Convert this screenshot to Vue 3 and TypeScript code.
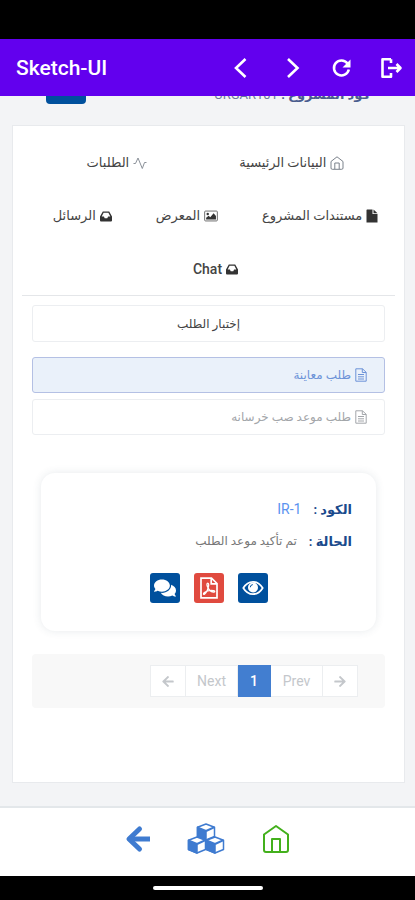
<script setup lang="ts">
import { ref } from 'vue'

interface Tab {
  label: string
  icon: 'home' | 'pulse' | 'file' | 'image' | 'inbox'
}

const tabRows: { layout: string; tabs: Tab[] }[] = [
  {
    layout: 'wide',
    tabs: [
      { label: 'البيانات الرئيسية', icon: 'home' },
      { label: 'الطلبات', icon: 'pulse' },
    ],
  },
  {
    layout: 'tight',
    tabs: [
      { label: 'مستندات المشروع', icon: 'file' },
      { label: 'المعرض', icon: 'image' },
      { label: 'الرسائل', icon: 'inbox' },
    ],
  },
  { layout: 'latin', tabs: [{ label: 'Chat', icon: 'inbox' }] },
]

const requestTypes: string[] = ['طلب معاينة', 'طلب موعد صب خرسانه']
const selected = ref<number>(0)

const arrowPath =
  'M257.5 445.1l-22.2 22.2c-9.4 9.4-24.6 9.4-33.9 0L7 273c-9.4-9.4-9.4-24.6 0-33.9L201.4 44.7c9.4-9.4 24.6-9.4 33.9 0l22.2 22.2c9.5 9.5 9.3 25-.4 34.3L136.6 216H424c13.3 0 24 10.7 24 24v32c0 13.3-10.7 24-24 24H136.6l120.5 114.8c9.8 9.3 10 24.8.4 34.3z'
</script>

<template>
  <div class="screen">
    <div class="status"></div>
    <header class="bar">
      <h1>Sketch-UI</h1>
      <nav class="bar-actions">
        <button type="button" aria-label="Back">
          <svg width="24" height="24" viewBox="0 0 24 24" class="line"><path d="M16.500 3 7 12l9.500 9" /></svg>
        </button>
        <button type="button" aria-label="Forward">
          <svg width="24" height="24" viewBox="0 0 24 24" class="line"><path d="M9 3l9.500 9L9 21" /></svg>
        </button>
        <button type="button" aria-label="Reload">
          <svg width="24" height="24" viewBox="0 0 24 24">
            <path fill="none" stroke="#fff" stroke-width="2.500" d="M18.500 7.500A7.500 7.500 0 1 0 19.800 13.500" />
            <path fill="#fff" d="M21.500 3.500v8h-8z" />
          </svg>
        </button>
        <button type="button" aria-label="Log out">
          <svg width="24" height="24" viewBox="0 0 24 24" class="line" stroke-linejoin="round">
            <path d="M12 3.200H3.500v17.600H12V17M12 3.200V7M9 12h12.500M17.500 8l4 4-4 4" />
          </svg>
        </button>
      </nav>
    </header>

    <main class="page" dir="rtl">
      <div class="project">
        <p><b>كود المشروع :</b> <span dir="ltr">URGAR101</span></p>
        <button type="button" aria-label="Project"></button>
      </div>

      <section class="panel">
        <nav class="tabs">
          <div v-for="(row, r) in tabRows" :key="r" class="tab-row" :class="row.layout">
            <a v-for="tab in row.tabs" :key="tab.label" href="#" class="tab">
              <svg v-if="tab.icon === 'home'" width="14" height="14" viewBox="0 0 14 14" fill="none" stroke="#7b828b">
                <path d="M1 5.500 7 .8l6 4.700V12q0 1.300-1.300 1.300H2.300Q1 13.300 1 12ZM4.800 13V7h4.400v6" />
              </svg>
              <svg v-else-if="tab.icon === 'pulse'" width="14" height="14" viewBox="0 0 14 14" fill="none" stroke="#8b9199">
                <path d="M.5 7.500h2L5 2l4.300 10.500L11.500 6.500h2" />
              </svg>
              <svg v-else-if="tab.icon === 'file'" width="12" height="14" viewBox="0 0 12 14" fill="#333">
                <path d="M1 .5h5.500V5H11.500v8.500H.5V1ZM7.500.5l4 3.700h-4Z" />
              </svg>
              <svg v-else-if="tab.icon === 'image'" width="14" height="14" viewBox="0 0 15 14">
                <rect x=".7" y="1.700" width="13.600" height="10.600" rx="1" fill="#fff" stroke="#666" />
                <circle cx="4" cy="4.800" r="1.300" fill="#333" />
                <path fill="#333" d="M2.300 10.800V9L5 6.800l1.700 1.500L10.300 4l2.500 3v3.800Z" />
              </svg>
              <svg v-else width="12" height="14" viewBox="0 0 12 14" fill="#333" fill-rule="evenodd">
                <path d="M2.800 2.500h6.400L12 7.500v4q0 1-1 1H1q-1 0-1-1v-4ZM3.600 3.800 1.700 7.500h2.200l.8 1.700h2.600l.8-1.700h2.200L8.400 3.800Z" />
              </svg>
              <span>{{ tab.label }}</span>
            </a>
          </div>
        </nav>

        <div class="requests">
          <button type="button" class="option picker">إختبار الطلب</button>
          <div class="options">
            <button
              v-for="(name, i) in requestTypes"
              :key="name"
              type="button"
              class="option"
              :class="{ active: selected === i }"
              @click="selected = i"
            >
              <svg width="12" height="14" viewBox="0 0 12 14" fill="none" stroke="currentColor">
                <path d="M.8.8H7.500L11.200 4.300v8.900H.8ZM7.300.8v3.700h3.900M3 6.500h6M3 8.800h6M3 11h6" />
              </svg>
              <span>{{ name }}</span>
            </button>
          </div>

          <article class="card">
            <dl>
              <div>
                <dt>الكود :</dt>
                <dd class="code" dir="ltr">IR-1</dd>
              </div>
              <div>
                <dt>الحالة :</dt>
                <dd>تم تأكيد موعد الطلب</dd>
              </div>
            </dl>
            <div class="actions">
              <button type="button" aria-label="View">
                <svg width="22" height="22" viewBox="0 0 22 22">
                  <path fill="none" stroke="#fff" stroke-width="1.700" d="M1.300 11Q5 4.800 11 4.800T20.700 11Q17 17.200 11 17.200T1.300 11Z" />
                  <circle cx="11" cy="10.500" r="5" fill="#fff" />
                  <path fill="none" stroke="#00509d" d="M8.300 10.300Q8.300 7.800 10.800 7.600" />
                </svg>
              </button>
              <button type="button" class="pdf" aria-label="PDF">
                <svg width="22" height="22" viewBox="0 0 22 22" fill="none" stroke="#fff">
                  <path stroke-width="1.700" d="M3 1.200h10.500L19 6.500v14.300H3ZM13.200 1.200v5.600H19" />
                  <path stroke-width="1.300" d="M9.800 6.200c-1.100 0-1 1.600-.4 3.200 1.100 3 3.200 5.200 6 5.700 1.700.2 1.900-1.200.2-1.500-3-.5-7 .4-9.200 2-1.500 1.100-1 2.200.1 1.500 2-1.400 4.100-6.100 4.200-9 0-1.100-.3-1.900-.9-1.900Z" />
                </svg>
              </button>
              <button type="button" aria-label="Comments">
                <svg width="22" height="20" viewBox="0 0 576 512" fill="#fff">
                  <path d="M416 192c0-88.400-93.100-160-208-160S0 103.600 0 192c0 34.300 14.100 65.900 38 92-13.400 30.200-35.500 54.200-35.800 54.500-2.200 2.300-2.800 5.700-1.500 8.700S4.800 352 8 352c36.600 0 66.900-12.300 88.700-25 32.200 15.700 70.300 25 111.300 25 114.900 0 208-71.600 208-160zm122 220c23.900-26 38-57.700 38-92 0-66.900-53.500-124.200-129.300-148.100.9 6.600 1.300 13.300 1.300 20.100 0 105.900-107.700 192-240 192-10.800 0-21.300-.8-31.700-1.900C207.800 439.600 281.800 480 368 480c41 0 79.100-9.200 111.300-25 21.800 12.700 52.100 25 88.700 25 3.200 0 6.100-1.900 7.300-4.800 1.300-2.900.7-6.300-1.500-8.700-.3-.3-22.400-24.200-35.800-54.500z" />
                </svg>
              </button>
            </div>
          </article>

          <nav class="pager">
            <button type="button" aria-label="First">
              <svg class="flip" width="12" height="13" viewBox="0 0 448 512" fill="currentColor"><path :d="arrowPath" /></svg>
            </button>
            <button type="button" class="word">Prev</button>
            <button type="button" class="current">1</button>
            <button type="button" class="word">Next</button>
            <button type="button" aria-label="Last">
              <svg width="12" height="13" viewBox="0 0 448 512" fill="currentColor"><path :d="arrowPath" /></svg>
            </button>
          </nav>
        </div>
      </section>
    </main>

    <footer class="dock">
      <a href="#" aria-label="Back">
        <svg width="25" height="30" viewBox="0 0 25 30" fill="none" stroke="#3f7bd0" stroke-width="5">
          <path stroke-linecap="round" stroke-linejoin="round" d="M14.500 5 4 15l10.500 10" />
          <path d="M5 15h20" />
        </svg>
      </a>
      <a href="#" aria-label="Projects">
        <svg width="38" height="32" viewBox="0 0 38 32" stroke="#3f7bd0" stroke-width="1.500" stroke-linejoin="round">
          <g v-for="(at, i) in ['translate(10 1)', 'translate(1 14)', 'translate(19 14)']" :key="i" :transform="at">
            <path fill="#fff" d="M9 0 17.500 3.200V12.500L9 16 .5 12.500V3.200Z" />
            <path fill="#3f7bd0" d="M.5 3.200 9 6.800V16L.5 12.500Z" />
            <path fill="none" stroke-width="2" d="M9 7 17.500 3.200" />
          </g>
        </svg>
      </a>
      <a href="#" aria-label="Home">
        <svg width="28" height="30" viewBox="0 0 28 30" fill="none" stroke="#43b01c" stroke-width="2" stroke-linejoin="round">
          <path d="M14 2 26 10.500V26q0 2-2 2H4q-2 0-2-2V10.500ZM10 28V15h8v13" />
        </svg>
      </a>
    </footer>
    <div class="gesture"><span></span></div>
  </div>
</template>

<style>
body {
  margin: 0;
  background: #000;
}
</style>

<style scoped>
* {
  box-sizing: border-box;
}
.screen {
  display: flex;
  flex-direction: column;
  min-height: 100vh;
  background: #f3f4f6;
  font-family: Roboto, 'DejaVu Sans', sans-serif;
  font-size: 13px;
  color: #444;
}
button {
  font: inherit;
  color: inherit;
  padding: 0;
  border: 0;
  background: none;
  cursor: pointer;
}
a {
  color: inherit;
  text-decoration: none;
}
svg {
  display: block;
  flex: none;
}
.status {
  height: 39px;
  background: #000;
}
.bar {
  display: flex;
  align-items: center;
  justify-content: space-between;
  height: 57px;
  padding: 0 12px 0 16px;
  background: #6200ee;
  color: #fff;
}
.bar h1 {
  margin: 0;
  font-size: 21px;
  font-weight: 500;
}
.bar-actions {
  display: flex;
  gap: 26px;
}
.line {
  fill: none;
  stroke: #fff;
  stroke-width: 2.6;
}
.page {
  flex: 1;
  display: flex;
  flex-direction: column;
  padding: 0 10px 23px 12px;
}
.project {
  display: flex;
  align-items: flex-end;
  justify-content: space-between;
  height: 29px;
  padding: 0 35px 21px 34px;
  overflow: hidden;
  color: #6b7a9c;
}
.project p {
  margin: 0;
  line-height: 18px;
}
.project b {
  color: #4a5c8e;
}
.project button {
  width: 40px;
  height: 30px;
  border-radius: 4px;
  background: #00509d;
}
.panel {
  flex: 1;
  padding: 10px 9px;
  background: #fff;
  border: 1px solid #e8eaed;
}
.tabs {
  padding-left: 14px;
  border-bottom: 1px solid #e4e6e9;
}
.tab-row {
  display: flex;
  justify-content: center;
  height: 53px;
}
.wide {
  gap: 92px;
}
.tight {
  gap: 44px;
}
.latin {
  font-size: 14px;
}
.tab {
  display: flex;
  align-items: center;
  gap: 4px;
  font-weight: 500;
}
.requests {
  padding: 9px 10px;
}
.option {
  display: flex;
  align-items: center;
  gap: 4px;
  width: 100%;
  height: 36px;
  padding: 0 17px;
  border: 1px solid #eceef1;
  border-radius: 3px;
  font-size: 12px;
  color: #a3a6aa;
}
.picker {
  justify-content: center;
  height: 37px;
  color: #444;
}
.options {
  display: grid;
  gap: 6px;
  margin-top: 15px;
}
.active {
  background: #eaf1fa;
  border-color: #b4c0e4;
  color: #6d93d8;
}
.card {
  margin: 38px 9px 0;
  padding: 20px 24px 28px;
  border-radius: 14px;
  box-shadow: 0 0 8px rgba(60, 80, 100, 0.12);
}
dl {
  margin: 0;
}
dl div {
  display: flex;
  align-items: center;
  gap: 12px;
  height: 32px;
}
dt {
  font-weight: 700;
  color: #1b4a8c;
}
dd {
  margin: 0;
  font-size: 12px;
  color: #777;
}
.code {
  font-size: 14px;
  color: #5b93f0;
}
.actions {
  display: flex;
  justify-content: center;
  gap: 14px;
  margin-top: 16px;
}
.actions button {
  display: grid;
  place-items: center;
  width: 30px;
  height: 30px;
  border-radius: 3px;
  background: #00509d;
}
.actions .pdf {
  background: #e04a3f;
}
.pager {
  display: flex;
  margin-top: 23px;
  padding: 11px 27px;
  background: #f8f8f8;
  border-radius: 4px;
  font-size: 14px;
  color: #c4c7cb;
}
.pager button {
  display: grid;
  place-items: center;
  width: 36px;
  height: 32px;
  margin-left: -1px;
  border: 1px solid #eceef0;
  background: #fff;
}
.pager .word {
  width: 53px;
}
.pager .current {
  width: 34px;
  background: #427ed0;
  border-color: #427ed0;
  color: #fff;
  font-weight: 500;
}
.flip {
  transform: scaleX(-1);
}
.dock {
  display: flex;
  align-items: center;
  justify-content: center;
  gap: 37px;
  height: 70px;
  padding-bottom: 6px;
  border-top: 2px solid #e3e7ea;
  background: #fff;
}
.gesture {
  display: flex;
  justify-content: center;
  align-items: center;
  height: 24px;
  background: #000;
}
.gesture span {
  width: 110px;
  height: 4px;
  border-radius: 2px;
  background: #fff;
}
</style>
